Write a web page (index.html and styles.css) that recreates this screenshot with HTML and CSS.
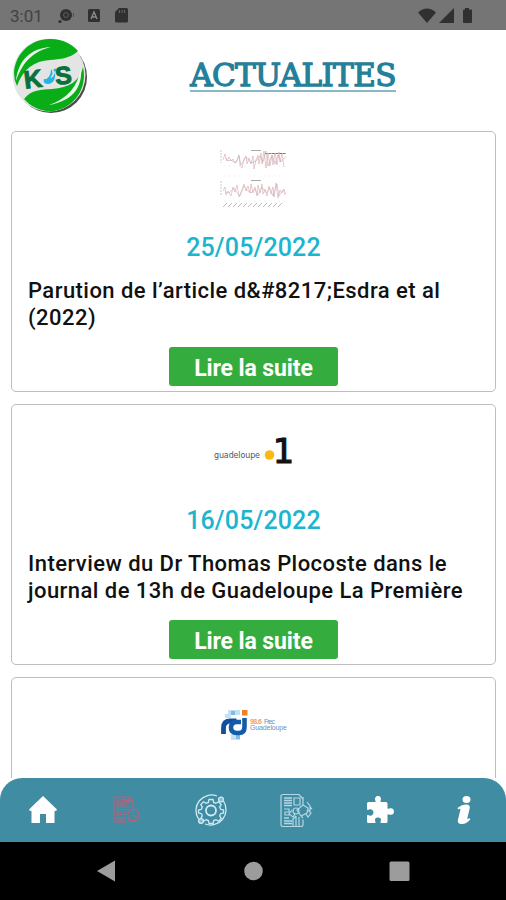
FILE: index.html
```html
<!DOCTYPE html>
<html lang="fr">

<head>
    <meta charset="UTF-8" />
    <meta name="viewport" content="width=device-width, initial-scale=1.0" />
    <title>KJS - Actualités</title>
    <link rel="stylesheet" href="styles.css">
</head>

<body>
    <div class="app">

        <div class="status-bar">
            <span class="time">3:01</span>
            <svg class="status-left" width="74" height="18" viewBox="0 0 74 18">
                <circle cx="8" cy="8" r="6" fill="#303030" />
                <circle cx="8" cy="8" r="2.4" fill="none" stroke="#5c5c5c" />
                <circle cx="2" cy="14.5" r="1.6" fill="#303030" />
                <path d="M15.5 6v4" stroke="#505050" />
                <rect x="30" y="2" width="12" height="13" rx="1.5" fill="#303030" />
                <path d="M33 12l3-7 3 7M34 10h4" fill="none" stroke="#8d8d8d" stroke-width="1.3" />
                <path d="M61 1h7.500q1.500 0 1.500 1.500V14q0 1.500-1.500 1.500h-10Q57 15.500 57 14V5z" fill="#303030" />
                <path d="M61.500 3v3M64 3v3M66.500 3v3" stroke="#666" />
            </svg>
            <svg class="status-right" width="56" height="18" viewBox="0 0 56 18">
                <path d="M0 5.500Q9-2.500 18 5.500L9 16z" fill="#303030" />
                <path d="M21 16L36 1v15z" fill="#303030" />
                <path d="M47 1h4v1.500h2q1 0 1 1V15q0 1-1 1h-7q-1 0-1-1V3.500q0-1 1-1h1z" fill="#303030" />
            </svg>
        </div>

        <header class="header">
            <svg class="logo" width="80" height="80" viewBox="0 0 80 80">
                <circle cx="41" cy="41" r="36" fill="#4b4b4b" />
                <circle cx="39" cy="39" r="36.500" fill="#e4e4e4" />
                <path d="M4 37C5 17 22 2 41 3c12 0 21 5 27 12-9 8-18 8-28 9C24 25 13 33 7 50Q4 44 4 37z" fill="#08ad18" />
                <path d="M73 31c5 21-9 41-29 44-13 1-23-4-30-12 8-10 17-9 28-10 17-1 28-8 31-22z" fill="#08ad18" />
                <path d="M6 45C8 24 21 12 41 11 25 15 13 24 6 45zM71 31c2 21-9 34-32 38 18-6 29-18 32-38z" fill="#e9f8e9" />
                <text class="logo-text" x="14" y="52" transform="rotate(-7 20 45)">K</text>
                <text class="logo-text" x="45" y="48" transform="rotate(-5 54 40)">S</text>
                <path d="M41 33c3 4 1 7-1 9 3 0 4-3 5-6 1 7-2 12-7 12-4 0-5-3-4-5 4 1 7-4 7-10z" fill="#20b5e4" />
                <circle cx="45" cy="34" r="1.500" fill="#20b5e4" />
            </svg>
            <h1 class="title"><span>ACTUALITES</span></h1>
        </header>

        <main class="news">
            <article class="card">
                <svg class="picture" width="68" height="68" viewBox="0 0 68 68">
                    <g fill="none" stroke-width=".6">
                        <path d="M1 5v13M1 36v14" stroke="#aaa" stroke-dasharray="2 1" />
                        <path d="M31 5.500h10M31 35.500h10" stroke="#aaa" stroke-width="1" />
                        <path d="M45 8.500h21" stroke="#777" stroke-width="1.200" stroke-dasharray="3 .5" />
                        <path d="M3 15l2-6 2 7 2-4 2 4 2-2 2 4 2-3 2-5 1 10 2 3 2-9 2-3 1 8 2-6 2 6 2-8 1 13 2-9 2-5 1 9 2-11 1 11 2-13 2 17 2-15 2 13 2-11 1 10 2-12 2 12 2-13 1 10 2-8 2 13" stroke="#dba5ab" />
                        <path d="M5 13l3 3 3-1 5 3 3-7 2 9 5-8 5 6 5-2 4-5 3 6 3-11 2 15 4-11 3 9 3-9 3 7 5-6" stroke="#b5b1b3" />
                        <path d="M3 46l2-4 1 8 2-4 3 5 2-9 2 5 2-7 2 12 2-5 3-8 2 7 2-5 2 7 1-9 2 9 2-6 2 9 1-11 2 8 2-9 1 10 2-5 2 7 2-10 2 8 2-7 1 10 2-14 2 15 2-8 2 3 2-4 1 6" stroke="#dba5ab" />
                        <path d="M5 47l4 1 5-5 3 5 3 3 4-10 4 5 3 2 4-4 3 6 4-8 4 6 4-5 3 8 4-12 2 12 4-6 3 4" stroke="#bdb8ba" />
                        <path d="M3 62l4-4m1 4l4-4m1 4l4-4m1 4l4-4m1 4l4-4m1 4l4-4m1 4l4-4m1 4l4-4m1 4l4-4m1 4l4-4m1 4l4-4m1 4l4-4" stroke="#bbb" stroke-width="1" />
                        <path d="M4 21h62M4 31h62M4 56h62" stroke="#ddd" stroke-dasharray="1 4" />
                    </g>
                </svg>
                <p class="date">25/05/2022</p>
                <h2 class="card-title">Parution de l’article d&amp;#8217;Esdra et al (2022)</h2>
                <button class="btn">Lire la suite</button>
            </article>

            <article class="card">
                <svg class="picture" width="90" height="68" viewBox="0 0 90 68">
                    <text class="gp-text" x="5" y="40" textLength="46">guadeloupe</text>
                    <circle cx="60.500" cy="37" r="4.800" fill="#fcb913" />
                    <text class="gp-one" x="64" y="45">1</text>
                </svg>
                <p class="date">16/05/2022</p>
                <h2 class="card-title">Interview du Dr Thomas Plocoste dans le journal de 13h de Guadeloupe La Première</h2>
                <button class="btn">Lire la suite</button>
            </article>

            <article class="card">
                <svg class="picture" width="76" height="68" viewBox="0 0 76 68">
                    <path d="M12 19h12v5H12zM15 43h9v6h-9zM9 23h6v4H9z" fill="#c3e1f4" />
                    <path d="M15 20h4v4h-4zM20 44h4v4h-4z" fill="#82bce4" />
                    <path d="M7.500 43v-6q0-7 7-7h6" fill="none" stroke="#124f9e" stroke-width="4.800" />
                    <path d="M25 31h-4q-6 0-6 5.500t6 5.500h2q5.500 0 5.500-6v-9" fill="none" stroke="#145ba9" stroke-width="4.600" />
                    <rect x="26" y="19" width="5.500" height="5.500" fill="#ed8123" />
                    <text class="rci-orange" x="34" y="33" textLength="12">98.6</text>
                    <text class="rci-blue" x="48" y="33" textLength="11">Frec</text>
                    <text class="rci-blue" x="34" y="39" textLength="37">Guadeloupe</text>
                </svg>
            </article>
        </main>

        <nav class="tabs">
            <a class="tab">
                <svg width="34" height="34" viewBox="0 0 34 34">
                    <path d="M17 3L31 16.500q-.5 1.500-2 1.500h-.5v12H20v-9h-6v9H5.500V18H5q-1.500 0-2-1.500z" fill="#fff" />
                </svg>
            </a>
            <a class="tab active">
                <svg width="34" height="34" viewBox="0 0 34 34" fill="none" stroke="#b8627a" stroke-width="1.200">
                    <path d="M23 15V8l-4-4H5Q4 4 4 5v23q0 1 1 1h13M19 4v4h4" />
                    <path d="M7 7h9v5H7zM7 10h9M6 14h14M6 16.500h14M7 19h4v3H7zM13 19h4M13 21.500h3M6 25h9M6 27h9" />
                    <path d="M12 6l7 3" stroke-width="2" />
                    <circle cx="23.500" cy="22" r="5.800" />
                    <path d="M23.500 18v4l3 2M18 28h9" />
                </svg>
            </a>
            <a class="tab">
                <svg width="34" height="34" viewBox="0 0 34 34" fill="none" stroke="#cfeaf3" stroke-width="1.300">
                    <path d="M23 3A15.500 15.500 0 0 0 4.500 26M11 31A15.500 15.500 0 0 0 29.500 8" />
                    <path d="M15 6.500h4l.7 2.900 2.200.9 2.600-1.500 2.700 2.700-1.500 2.600.9 2.200 2.900.7v3l-2.900.7-.9 2.200 1.500 2.600-2.700 2.700-2.600-1.500-2.200.9-.7 2.900h-4l-.7-2.900-2.200-.9-2.600 1.500-2.700-2.700 1.500-2.600-.9-2.200-2.900-.7v-3l2.900-.7.9-2.200-1.500-2.600 2.700-2.700 2.600 1.500 2.200-.9z" />
                    <circle cx="17" cy="17.500" r="5" stroke-width="1.800" />
                    <circle cx="27" cy="6.500" r="2.400" fill="#83b8c9" />
                    <circle cx="7" cy="28" r="2.400" fill="#83b8c9" />
                </svg>
            </a>
            <a class="tab">
                <svg width="34" height="34" viewBox="0 0 34 34" fill="none" stroke="#b3d7e3" stroke-width="1.200">
                    <path d="M24 6l-4-4.500H4q-2 0-2 2v28q0 2 2 2h18q2 0 2-2v-5" />
                    <path d="M5 5h8M5 7.500h8M5 10h8M5 12.500h8M5 25h5M5 28h8M5 30.500h8" stroke-width="1.500" />
                    <path d="M15 5h6v7h-6zM5 16h5v3H6v3h5M13 17l-3 4 4 3 2-3" />
                    <path d="M24 4v8l-6 5 4 6 6-3 1-5-5-3M28 9l3 4v5M22 23l2 2M29 17l3 3-3 4-2-3M31 14l2 2" />
                    <path d="M17 23v10M20 24v9M14 33v-7l3-3" />
                    <circle cx="17" cy="18" r="3" />
                </svg>
            </a>
            <a class="tab">
                <svg width="34" height="34" viewBox="0 0 34 34">
                    <path d="M4 10.500q0-1.500 1.500-1.500H12q1 0 .6-1C11 5 13 3 15 3s4 2 2.500 5q-.5 1 .6 1H23q1.500 0 1.500 1.500V15q0 1.300 1.500.6c3-1.300 5 .4 5 2.900s-2 4.200-5 2.900q-1.500-.7-1.500.6v6.500q0 1.500-1.500 1.500h-4.500q-1.500 0-1-1.200C19 26 17 24.500 15 24.500s-4 1.500-2.500 4.300q.5 1.200-1 1.200h-6Q4 30 4 28.500V23q0-1.400 1.600-.8C8 23.500 10.500 22 10.500 19.500S8 15.500 5.600 16.800Q4 17.400 4 16z" fill="#fff" />
                </svg>
            </a>
            <a class="tab">
                <svg width="34" height="34" viewBox="0 0 34 34" fill="#fff">
                    <ellipse cx="19.500" cy="6.500" rx="4" ry="3.600" />
                    <path d="M10.500 15c3-2.500 6-3.500 8.500-3.500 3.200 0 4.300 1.600 3.600 4.300l-2.100 8.700c-.4 1.800.2 1.700 2 .5l.8 1.400C21 29 18.300 31 15 31c-3.600 0-4.700-2-4-4.500l2.300-9.300c.3-1.700-.4-1.800-2.200-.6z" />
                </svg>
            </a>
        </nav>

        <div class="system-bar">
            <svg width="22" height="22" viewBox="0 0 22 22"><path d="M1 11L19 .5v21z" /></svg>
            <svg width="22" height="22" viewBox="0 0 22 22"><circle cx="11.500" cy="11" r="9.300" /></svg>
            <svg width="22" height="22" viewBox="0 0 22 22"><rect x="1.500" y="1.500" width="20" height="19.500" rx="1.500" /></svg>
        </div>

    </div>
</body>

</html>
```
FILE: styles.css
```css
* {
    margin: 0;
    padding: 0;
    box-sizing: border-box;
}

body {
    background-color: #fff;
    font-family: Roboto, "Liberation Sans", sans-serif;
}

.app {
    width: 506px;
    height: 900px;
    display: flex;
    flex-direction: column;
    overflow: hidden;
}

.status-bar {
    height: 30px;
    flex: none;
    display: flex;
    align-items: center;
    padding: 2px 32px 0 10px;
    background-color: #757575;
}

.time {
    width: 48px;
    font-size: 17px;
    color: #424242;
}

.status-right {
    margin-left: auto;
}

.header {
    height: 101px;
    flex: none;
    display: flex;
    align-items: flex-start;
    padding: 6px 0 0 11px;
}

.logo {
    flex: none;
    margin-left: -1px;
}

.logo-text {
    font-family: "Liberation Sans", Arial, sans-serif;
    font-size: 25px;
    font-weight: bold;
    fill: #08713d;
    stroke: #08713d;
}

.title {
    flex: 1;
    padding: 19px 10px 0 0;
    text-align: center;
    font-family: "DejaVu Serif", serif;
    font-size: 31px;
    font-weight: normal;
    line-height: 40px;
    letter-spacing: -0.6px;
    color: #24809a;
    -webkit-text-stroke: 1.3px #24809a;
}

.title span {
    display: inline-block;
    height: 37px;
    border-bottom: 2px solid #8ab7c5;
}

.news {
    flex: 1;
    min-height: 0;
    display: flex;
    flex-direction: column;
    gap: 12px;
    padding: 0 10px 0 11px;
    overflow: hidden;
}

.card {
    height: 261px;
    flex: none;
    display: flex;
    flex-direction: column;
    align-items: center;
    padding: 13px 16px 0;
    border: 1.5px solid #bdbdbd;
    border-radius: 5px;
}

.picture {
    display: block;
    flex: none;
}

.date {
    margin-top: 20px;
    font-size: 25px;
    font-weight: 500;
    line-height: 30px;
    letter-spacing: 0.15px;
    color: #1cb5cf;
}

.card-title {
    align-self: stretch;
    margin-top: 14px;
    font-size: 22px;
    font-weight: 500;
    line-height: 27px;
    letter-spacing: 0.45px;
    color: #111;
}

.btn {
    width: 169px;
    height: 39px;
    margin-top: 16px;
    padding-top: 4px;
    border: none;
    border-radius: 3px;
    background-color: #34ad3e;
    font-family: inherit;
    font-size: 23px;
    font-weight: bold;
    letter-spacing: -0.1px;
    color: #fff;
}

.gp-text {
    font-family: "DejaVu Sans", sans-serif;
    font-size: 8px;
    fill: #555;
}

.gp-one {
    font-family: "DejaVu Sans", sans-serif;
    font-size: 33px;
    fill: #111;
    stroke: #111;
    stroke-width: 1.2px;
}

.rci-orange,
.rci-blue {
    font-family: "Liberation Sans", sans-serif;
    font-size: 7px;
    font-weight: bold;
    fill: #efa260;
}

.rci-blue {
    font-weight: normal;
    fill: #6b93bb;
}

.tabs {
    height: 64px;
    flex: none;
    display: flex;
    align-items: center;
    border-radius: 22px 22px 0 0;
    background-color: #408ca3;
}

.tab {
    flex: 1;
    display: flex;
    justify-content: center;
}

.tab svg {
    margin-left: 1px;
}

.system-bar {
    height: 58px;
    flex: none;
    display: flex;
    justify-content: center;
    align-items: center;
    gap: 124px;
    background-color: #000;
    fill: #9c9c9c;
}
```
